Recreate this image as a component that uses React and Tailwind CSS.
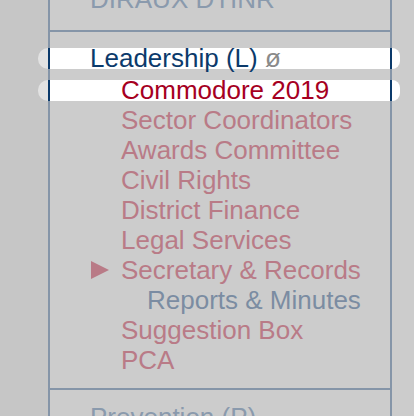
import React from 'react';

const items = [
  { label: 'Sector Coordinators' },
  { label: 'Awards Committee' },
  { label: 'Civil Rights' },
  { label: 'District Finance' },
  { label: 'Legal Services' },
  { label: 'Secretary & Records', active: true },
  { label: 'Reports & Minutes', sub: true },
  { label: 'Suggestion Box' },
  { label: 'PCA' },
];

function Highlight({ children, className }) {
  return (
    <div className="flex h-[21px] -ml-[12px] -mr-[10px]">
      <div className="w-[10px] rounded-l-full bg-[#e2e2e2]" />
      <div className={`flex-1 whitespace-nowrap bg-white border-x-2 border-[#0b3a6b] leading-[21px] ${className}`}>
        {children}
      </div>
      <div className="w-[8px] rounded-r-full bg-white" />
    </div>
  );
}

export default function App() {
  return (
    <div
      className="flex h-[416px] w-[414px] overflow-hidden bg-[#cccccc] text-[26px]"
      style={{ fontFamily: '"Liberation Sans", Arial, sans-serif' }}
    >
      <div className="w-[48px] shrink-0 bg-[#c6c6c6]" />
      <div className="w-[344px] shrink-0 border-x-2 border-[#8595a8]">
        {/* previous section */}
        <div className="-mt-[16px] pb-[16px] border-b-2 border-[#8595a8]">
          <div className="pl-[40px] leading-[30px] text-[#8a9aad]">DIRAUX DTINR</div>
        </div>

        {/* leadership section */}
        <div className="pt-[16px] pb-[13px] border-b-2 border-[#8595a8]">
          <Highlight className="pl-[40px] text-[#0b3a6b]">
            Leadership (L) <span className="text-[#8a8a8a]">ø</span>
          </Highlight>
          <div className="h-[11px]" />
          <Highlight className="pl-[71px] text-[#a6001f]">Commodore 2019</Highlight>
          <div className="h-[4px]" />
          {items.map((item) => (
            <div
              key={item.label}
              className={`flex items-center whitespace-nowrap leading-[30px] ${
                item.sub ? 'pl-[97px] text-[#7b8ca2]' : 'pl-[71px] text-[#b97b87]'
              }`}
            >
              {item.active && (
                <svg className="-ml-[30px] mr-[12px]" width="18" height="18" viewBox="0 0 18 18">
                  <polygon points="0,0 18,9 0,18" fill="#b97b87" />
                </svg>
              )}
              {item.label}
            </div>
          ))}
        </div>

        {/* next section */}
        <div className="pt-[12px]">
          <div className="pl-[40px] leading-[30px] text-[#8a9aad]">Prevention (P)</div>
        </div>
      </div>
      <div className="flex-1" />
    </div>
  );
}
